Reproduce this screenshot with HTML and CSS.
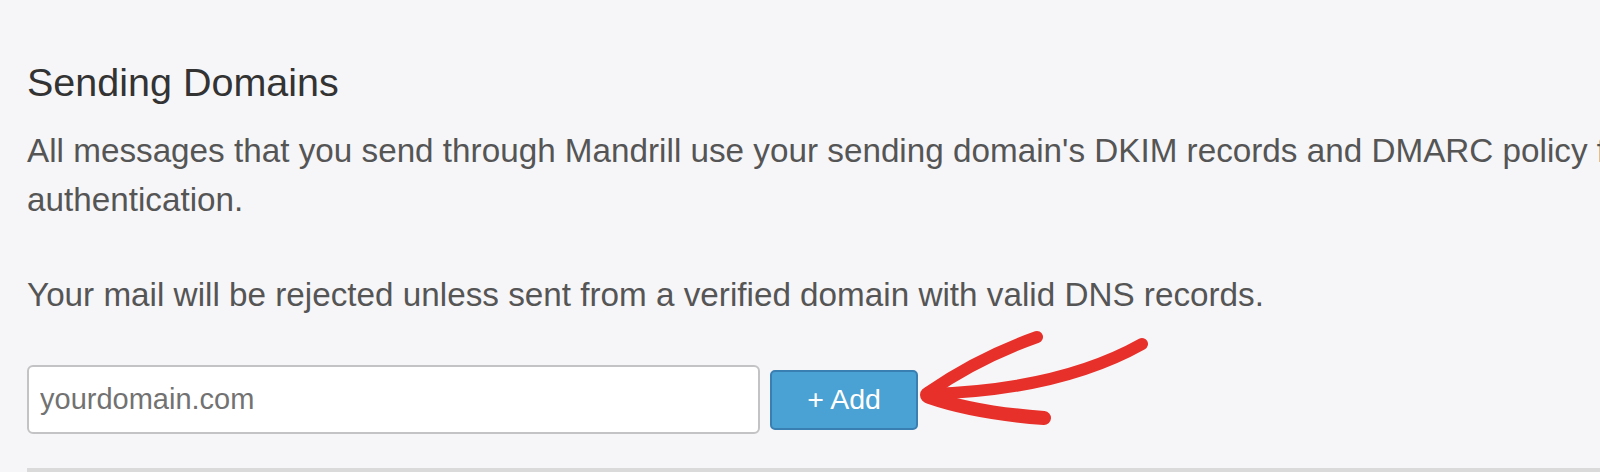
FILE: index.html
```html
<!DOCTYPE html>
<html lang="en">
<head>
    <meta charset="UTF-8">
    <meta name="viewport" content="width=device-width, initial-scale=1.0">
    <title>Sending Domains</title>
    <link rel="stylesheet" href="styles.css">
</head>
<body>

    <!-- Sending domains panel -->
    <div class="pagina">
        <h2 class="titulo">Sending Domains</h2>
        <p class="texto texto--intro">All messages that you send through Mandrill use your sending domain's DKIM records and DMARC policy for authentication.</p>
        <p class="texto">Your mail will be rejected unless sent from a verified domain with valid DNS records.</p>

        <form class="formulario" onsubmit="return false;">
            <input class="formulario__input" type="text" placeholder="yourdomain.com">
            <button class="formulario__boton" type="submit">+ Add</button>
        </form>

        <div class="tabla"></div>

        <!-- Flecha dibujada a mano encima -->
        <svg class="flecha" viewBox="0 0 1600 472" width="1600" height="472">
            <g fill="none" stroke="#e8302a" stroke-linecap="round" stroke-linejoin="round">
                <path d="M929 392 Q978 358 1037 337" stroke-width="12"/>
                <path d="M929 394 Q1060 390 1142 344" stroke-width="12"/>
                <path d="M929 397 Q975 413 1044 418" stroke-width="14"/>
                <circle cx="928" cy="395" r="3" stroke-width="10"/>
            </g>
        </svg>
    </div>

</body>
</html>
```

FILE: styles.css
```css
* {
    box-sizing: border-box;
}
body {
    margin: 0;
    font-family: "Liberation Sans", Arial, sans-serif;
    background-color: #f6f6f8;
    overflow: hidden;
    height: 472px;
}

.pagina {
    position: relative;
    width: 1740px;
    padding: 61px 0 0 27px;
}

.titulo {
    margin: 0 0 23px;
    font-size: 39.5px;
    font-weight: normal;
    line-height: 1.1;
    color: #333;
}

.texto {
    margin: 0 0 46px;
    font-size: 33.25px;
    line-height: 48.3px;
    color: #555;
}

.texto--intro {
    margin-bottom: 47px;
}

/* Formulario */
.formulario {
    display: flex;
    align-items: center;
    gap: 10px;
}

.formulario__input {
    width: 733px;
    height: 69px;
    padding: 0 11px;
    border: 2px solid #c3c3c5;
    border-radius: 6px;
    background-color: #fff;
    font-family: inherit;
    font-size: 29px;
    color: #333;
}

.formulario__input::placeholder {
    color: #727272;
}

.formulario__boton {
    width: 148px;
    height: 60px;
    background-color: #4aa1d3;
    color: #fff;
    border: 2px solid #3a7fb2;
    border-radius: 5px;
    font-family: inherit;
    font-size: 28.5px;
    cursor: pointer;
}

.tabla {
    margin-top: 34px;
    height: 20px;
    background-color: #dadadb;
}

.flecha {
    position: absolute;
    top: 0;
    left: 0;
    pointer-events: none;
}
```
